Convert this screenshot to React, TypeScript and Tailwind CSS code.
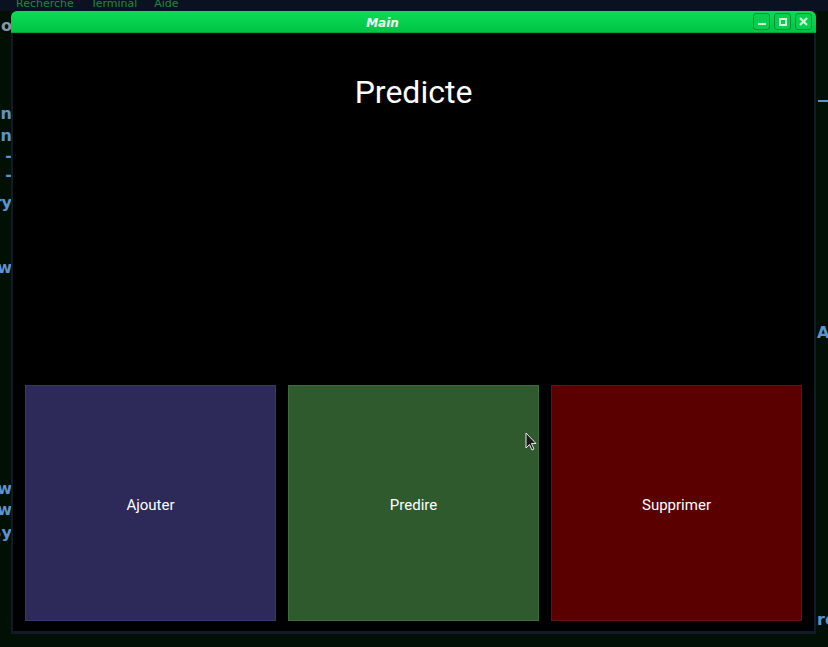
export default function App() {
  const leftBits = [
    { t: 'o', top: 18, color: 'text-[#8a94a6]' },
    { t: 'n', top: 106 },
    { t: 'n', top: 128 },
    { t: '-', top: 148 },
    { t: '-', top: 167 },
    { t: 'ry', top: 195 },
    { t: 'w', top: 260 },
    { t: 'w', top: 481 },
    { t: 'w', top: 502 },
    { t: 'Sy', top: 525 },
  ];

  const buttons = [
    { label: 'Ajouter', cls: 'bg-[#2d2a59] border-[#3a3670]' },
    { label: 'Predire', cls: 'bg-[#2e5a2e] border-[#3c6c3c]' },
    { label: 'Supprimer', cls: 'bg-[#5a0000] border-[#6a1010]' },
  ];

  return (
    <div className="relative w-[828px] h-[647px] overflow-hidden bg-[#020f04] font-['Roboto',sans-serif]">
      {/* terminal behind the window */}
      <div className="absolute left-0 top-0 w-full h-[11px] bg-[#0a1120] overflow-hidden">
        <div className="flex gap-[17px] pl-[16px] -mt-[4px] text-[11px] text-[#1c8a3c] font-['DejaVu_Sans',sans-serif]">
          <span>Recherche</span>
          <span>Terminal</span>
          <span>Aide</span>
        </div>
      </div>
      {leftBits.map((b, i) => (
        <span
          key={i}
          className={`absolute right-[816px] text-[16px] font-bold leading-none font-['DejaVu_Sans',sans-serif] ${b.color ?? 'text-[#5d92d2]'}`}
          style={{ top: b.top }}
        >
          {b.t}
        </span>
      ))}
      <div className="absolute left-[818px] top-[100px] w-[12px] h-[2px] bg-[#5d92d2]" />
      <span className="absolute left-[817px] top-[325px] text-[16px] font-bold leading-none text-[#5d92d2] font-['DejaVu_Sans',sans-serif]">A'</span>
      <span className="absolute left-[817px] top-[612px] text-[16px] font-bold leading-none text-[#5d92d2] font-['DejaVu_Sans',sans-serif]">ro</span>

      {/* window */}
      <div className="absolute left-[11px] top-[11px] w-[805px] h-[623px] flex flex-col">
        <div className="relative h-[22px] shrink-0 rounded-t-[6px] bg-gradient-to-b from-[#0cdc56] to-[#00c444] border-b border-[#00a33a] flex items-center justify-center pr-[62px] pt-[2px]">
          <span className="text-[12px] font-bold italic text-[#f4fff6] font-['DejaVu_Sans',sans-serif]">Main</span>
          <div className="absolute right-[4px] top-[2px] flex gap-[4px]">
            <div className="w-[17px] h-[17px] rounded-[3px] border border-[#0a8f35] bg-[#05cf4d] flex items-end justify-center pb-[4px]">
              <div className="w-[8px] h-[2px] bg-[#d2f5da]" />
            </div>
            <div className="w-[17px] h-[17px] rounded-[3px] border border-[#0a8f35] bg-[#05cf4d] flex items-center justify-center">
              <div className="w-[8px] h-[8px] border-2 border-[#d2f5da]" />
            </div>
            <div className="w-[17px] h-[17px] rounded-[3px] border border-[#0a8f35] bg-[#05cf4d] flex items-center justify-center">
              <svg width="9" height="9" viewBox="0 0 9 9">
                <path d="M1 1L8 8M8 1L1 8" stroke="#d2f5da" strokeWidth="2.2" />
              </svg>
            </div>
          </div>
        </div>
        <div className="flex-1 flex flex-col bg-black border-x-2 border-b-[3px] border-[#111a27]">
          <h1 className="pt-[40px] text-center text-[32px] leading-[38px] text-white">Predicte</h1>
          <div className="mt-auto flex gap-[12px] pl-[12px] pr-[11px] pb-[10px]">
            {buttons.map((b) => (
              <div
                key={b.label}
                className={`w-[251px] h-[236px] border flex items-center justify-center pt-[4px] text-[15px] text-white ${b.cls}`}
              >
                {b.label}
              </div>
            ))}
          </div>
        </div>
      </div>

      {/* mouse cursor */}
      <svg className="absolute left-[525px] top-[432px]" width="12" height="20" viewBox="0 0 12 20">
        <path d="M1 1L1 16L4.5 12.5L7 18L9 17L6.5 11.5L11 11.5Z" fill="#1a1a1a" stroke="#e8e8e8" strokeWidth="1" />
      </svg>
    </div>
  );
}
